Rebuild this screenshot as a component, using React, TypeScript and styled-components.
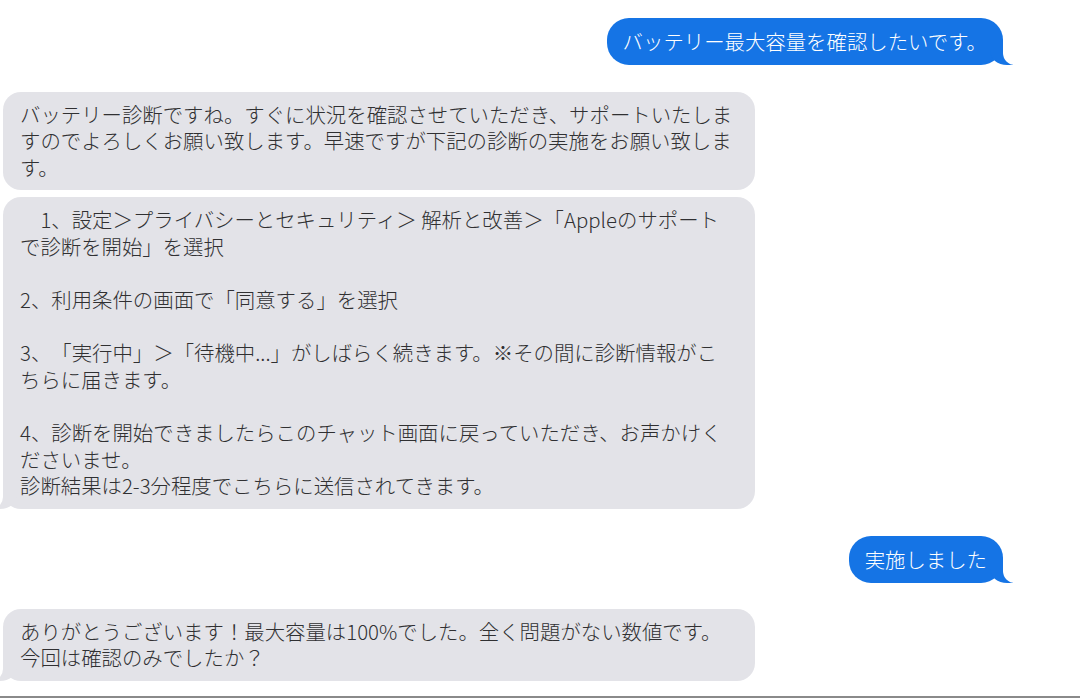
import React from "react";
import styled, { createGlobalStyle, css } from "styled-components";

const Global = createGlobalStyle`
  html, body { margin: 0; padding: 0; background: #ffffff; }
  body { overflow: hidden; font-family: "Noto Sans CJK JP", "Noto Sans", sans-serif; }
`;

const Page = styled.div`
  width: 1080px;
  height: 698px;
  display: flex;
  flex-direction: column;
  overflow: hidden;
  background: #ffffff;
`;

const Thread = styled.div`
  flex: 1;
  display: flex;
  flex-direction: column;
  padding-top: 18px;
`;

const Row = styled.div<{ $me?: boolean; $gap: number }>`
  display: flex;
  justify-content: ${(p) => (p.$me ? "flex-end" : "flex-start")};
  margin-top: ${(p) => p.$gap}px;
  padding: ${(p) => (p.$me ? "0 77px 0 0" : "0 0 0 3px")};
`;

const blueTail = css`
  &::before {
    content: "";
    position: absolute;
    bottom: 0;
    right: -10px;
    width: 23px;
    height: 22px;
    background: #1574e5;
    border-bottom-left-radius: 17px 14px;
  }
  &::after {
    content: "";
    position: absolute;
    bottom: 0;
    right: -28px;
    width: 28px;
    height: 24px;
    background: #ffffff;
    border-bottom-left-radius: 12px;
  }
`;

const grayTail = css`
  &::before {
    content: "";
    position: absolute;
    bottom: 0;
    left: -8px;
    width: 22px;
    height: 22px;
    background: #e3e3e8;
    border-bottom-right-radius: 17px 14px;
  }
  &::after {
    content: "";
    position: absolute;
    bottom: 0;
    left: -28px;
    width: 28px;
    height: 24px;
    background: #ffffff;
    border-bottom-right-radius: 12px;
  }
`;

const Bubble = styled.div<{ $me?: boolean; $tail?: boolean }>`
  position: relative;
  box-sizing: border-box;
  white-space: pre;
  line-height: 26.6px;
  font-weight: 300;
  text-spacing-trim: space-all;
  font-size: 20.4px;
  ${(p) =>
    p.$me
      ? css`
          background: #1574e5;
          color: #ffffff;
          padding: 10px 16px;
          border-radius: 22px;
        `
      : css`
          width: 752px;
          background: #e3e3e8;
          color: #303032;
          padding: 9px 17px 10px;
          border-radius: 18px;
        `}
  ${(p) => p.$tail && (p.$me ? blueTail : grayTail)}
`;

const Text = styled.span`
  position: relative;
  z-index: 1;
`;

const Divider = styled.div`
  height: 2px;
  background: #8a8a8a;
`;

const messages: { me?: boolean; tail?: boolean; gap: number; text: string }[] = [
  { me: true, tail: true, gap: 0, text: "バッテリー最大容量を確認したいです。" },
  {
    gap: 27,
    text:
      "バッテリー診断ですね。すぐに状況を確認させていただき、サポートいたしま\nすのでよろしくお願い致します。早速ですが下記の診断の実施をお願い致しま\nす。",
  },
  {
    gap: 7,
    tail: true,
    text:
      "\u30001、設定＞プライバシーとセキュリティ＞ 解析と改善＞「Appleのサポート\nで診断を開始」を選択\n\n2、利用条件の画面で「同意する」を選択\n\n3、「実行中」＞「待機中...」がしばらく続きます。※その間に診断情報がこ\nちらに届きます。\n\n4、診断を開始できましたらこのチャット画面に戻っていただき、お声かけく\nださいませ。\n診断結果は2-3分程度でこちらに送信されてきます。",
  },
  { me: true, tail: true, gap: 27, text: "実施しました" },
  {
    gap: 26,
    tail: true,
    text: "ありがとうございます！最大容量は100%でした。全く問題がない数値です。\n今回は確認のみでしたか？",
  },
];

export default function App() {
  return (
    <Page>
      <Global />
      <Thread>
        {messages.map((m, i) => (
          <Row key={i} $me={m.me} $gap={m.gap}>
            <Bubble $me={m.me} $tail={m.tail}>
              <Text>{m.text}</Text>
            </Bubble>
          </Row>
        ))}
      </Thread>
      <Divider />
    </Page>
  );
}
